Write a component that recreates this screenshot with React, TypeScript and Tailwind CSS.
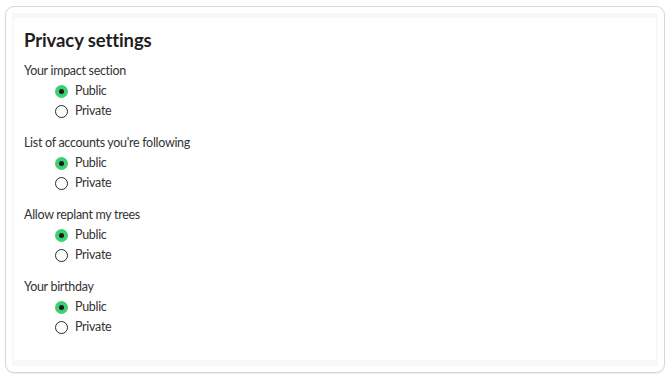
const SECTIONS = [
  { id: "impact", label: "Your impact section" },
  { id: "following", label: "List of accounts you're following" },
  { id: "replant", label: "Allow replant my trees" },
  { id: "birthday", label: "Your birthday" },
];

function Radio({ checked, label }: { checked: boolean; label: string }) {
  return (
    <label className="flex h-5 items-center gap-[7px]">
      {checked ? (
        <span className="flex h-[13px] w-[13px] items-center justify-center rounded-full bg-[#3fcf72]">
          <span className="h-[5px] w-[5px] rounded-full bg-[#1a1a1a]" />
        </span>
      ) : (
        <span className="h-[13px] w-[13px] rounded-full border-[1.5px] border-[#2a2a2a]" />
      )}
      <span>{label}</span>
    </label>
  );
}

export default function App() {
  return (
    <div className="h-[380px] w-[670px] bg-white p-[5px] pt-[6px] font-['Lato',sans-serif] text-[#333]">
      <div className="h-[367px] rounded-[9px] border border-[#d6d6d6] px-[6px] py-[6px] shadow-[0_1px_1px_rgba(0,0,0,0.08)]">
        <div className="h-full bg-[#f9f8f6] px-[2px] pb-[6px] pt-[5px]">
          <div className="h-full bg-white px-[10px] pt-[10px]">
            <h1 className="font-['Lato',sans-serif] text-[18.5px] font-bold leading-[24px] tracking-[-0.1px] text-[#1f1f1f]">
              Privacy settings
            </h1>
            <div className="mt-[9px] flex flex-col gap-[12px] text-[12.5px] tracking-[-0.3px]">
              {SECTIONS.map((s) => (
                <div key={s.id}>
                  <div className="h-5 leading-5">{s.label}</div>
                  <div className="pl-[31px]">
                    <Radio checked label="Public" />
                    <Radio checked={false} label="Private" />
                  </div>
                </div>
              ))}
            </div>
          </div>
        </div>
      </div>
    </div>
  );
}
